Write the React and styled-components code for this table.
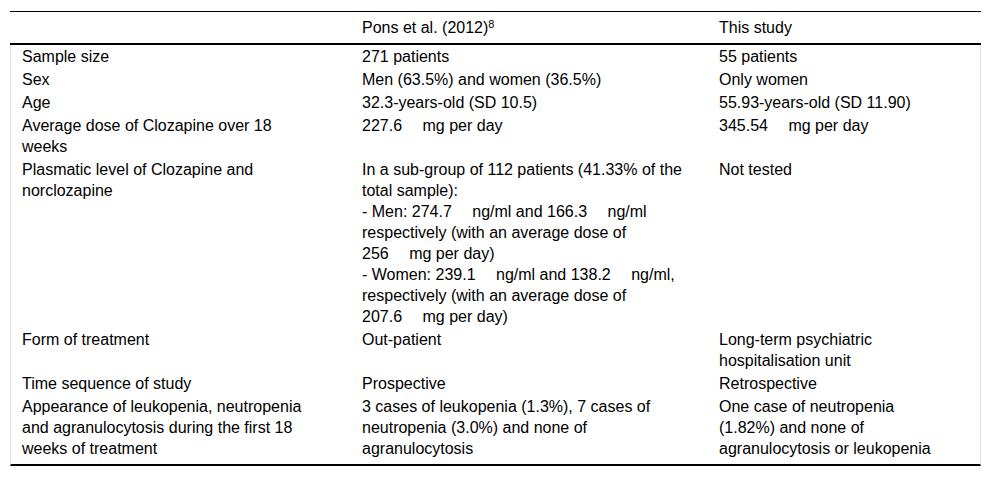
import React from "react"
import styled, { createGlobalStyle } from "styled-components"

const GlobalStyle = createGlobalStyle`
  body {
    margin: 0;
    background: #fff;
    font-family: "Liberation Sans", Arial, sans-serif;
    color: #000;
  }
`

const Page = styled.div`
  padding: 11px 10px;
`

const Table = styled.table`
  width: 971px;
  table-layout: fixed;
  border-collapse: separate;
  border-spacing: 0;
  font-size: 16px;
  line-height: 21px;
`

const Th = styled.th`
  text-align: left;
  font-weight: normal;
  vertical-align: top;
  padding: 5px ${props => props.$pr}px 5px 11px;
  border-top: 1px solid #000;
  border-bottom: 2px solid #000;
`

const Sup = styled.sup`
  font-size: 11px;
  line-height: 0;
  vertical-align: 5px;
`

const Td = styled.td`
  vertical-align: top;
  padding: 1px ${props => props.$pr}px 1px 11px;
`

const Row = styled.tr`
  ${Td}:first-child {
    border-left: 1px solid #e3e3e3;
  }
  ${Td}:last-child {
    border-right: 1px solid #e3e3e3;
  }
  ${Td} {
    padding-bottom: ${props => (props.$last ? "5px" : "1px")};
    border-bottom: ${props => (props.$last ? "2px solid #000" : "0")};
  }
`

const NoWrap = styled.span`
  white-space: nowrap;
`

// number and unit stay together, separated by a wide gap
const qty = (n, unit) => <NoWrap>{n + "\u2003\u00a0" + unit}</NoWrap>

const rows = [
  { label: "Sample size", pons: "271 patients", ours: "55 patients" },
  { label: "Sex", pons: "Men (63.5%) and women (36.5%)", ours: "Only women" },
  { label: "Age", pons: "32.3-years-old (SD 10.5)", ours: "55.93-years-old (SD 11.90)" },
  {
    label: "Average dose of Clozapine over 18 weeks",
    pons: <>{qty("227.6", "mg")} per day</>,
    ours: <>{qty("345.54", "mg")} per day</>,
  },
  {
    label: "Plasmatic level of Clozapine and norclozapine",
    pons: (
      <>
        In a sub-group of 112 patients (41.33% of the total sample):
        <br />- Men: {qty("274.7", "ng/ml")} and {qty("166.3", "ng/ml")} respectively (with an average dose of {qty("256", "mg")} per day)
        <br />- Women: {qty("239.1", "ng/ml")} and {qty("138.2", "ng/ml")}, respectively (with an average dose of {qty("207.6", "mg")} per day)
      </>
    ),
    ours: "Not tested",
  },
  { label: "Form of treatment", pons: "Out-patient", ours: "Long-term psychiatric hospitalisation unit" },
  { label: "Time sequence of study", pons: "Prospective", ours: "Retrospective" },
  {
    label: "Appearance of leukopenia, neutropenia and agranulocytosis during the first 18 weeks of treatment",
    pons: "3 cases of leukopenia (1.3%), 7 cases of neutropenia (3.0%) and none of agranulocytosis",
    ours: "One case of neutropenia (1.82%) and none of agranulocytosis or leukopenia",
  },
]

const App = () => (
  <>
    <GlobalStyle />
    <Page>
      <Table>
        <colgroup>
          <col style={{ width: 341 }} />
          <col style={{ width: 357 }} />
          <col style={{ width: 273 }} />
        </colgroup>
        <thead>
          <tr>
            <Th $pr={35}></Th>
            <Th $pr={13}>
              Pons et al. (2012)<Sup>8</Sup>
            </Th>
            <Th $pr={30}>This study</Th>
          </tr>
        </thead>
        <tbody>
          {rows.map((r, i) => (
            <Row key={i} $last={i === rows.length - 1}>
              <Td $pr={35}>{r.label}</Td>
              <Td $pr={13}>{r.pons}</Td>
              <Td $pr={30}>{r.ours}</Td>
            </Row>
          ))}
        </tbody>
      </Table>
    </Page>
  </>
)

export default App
